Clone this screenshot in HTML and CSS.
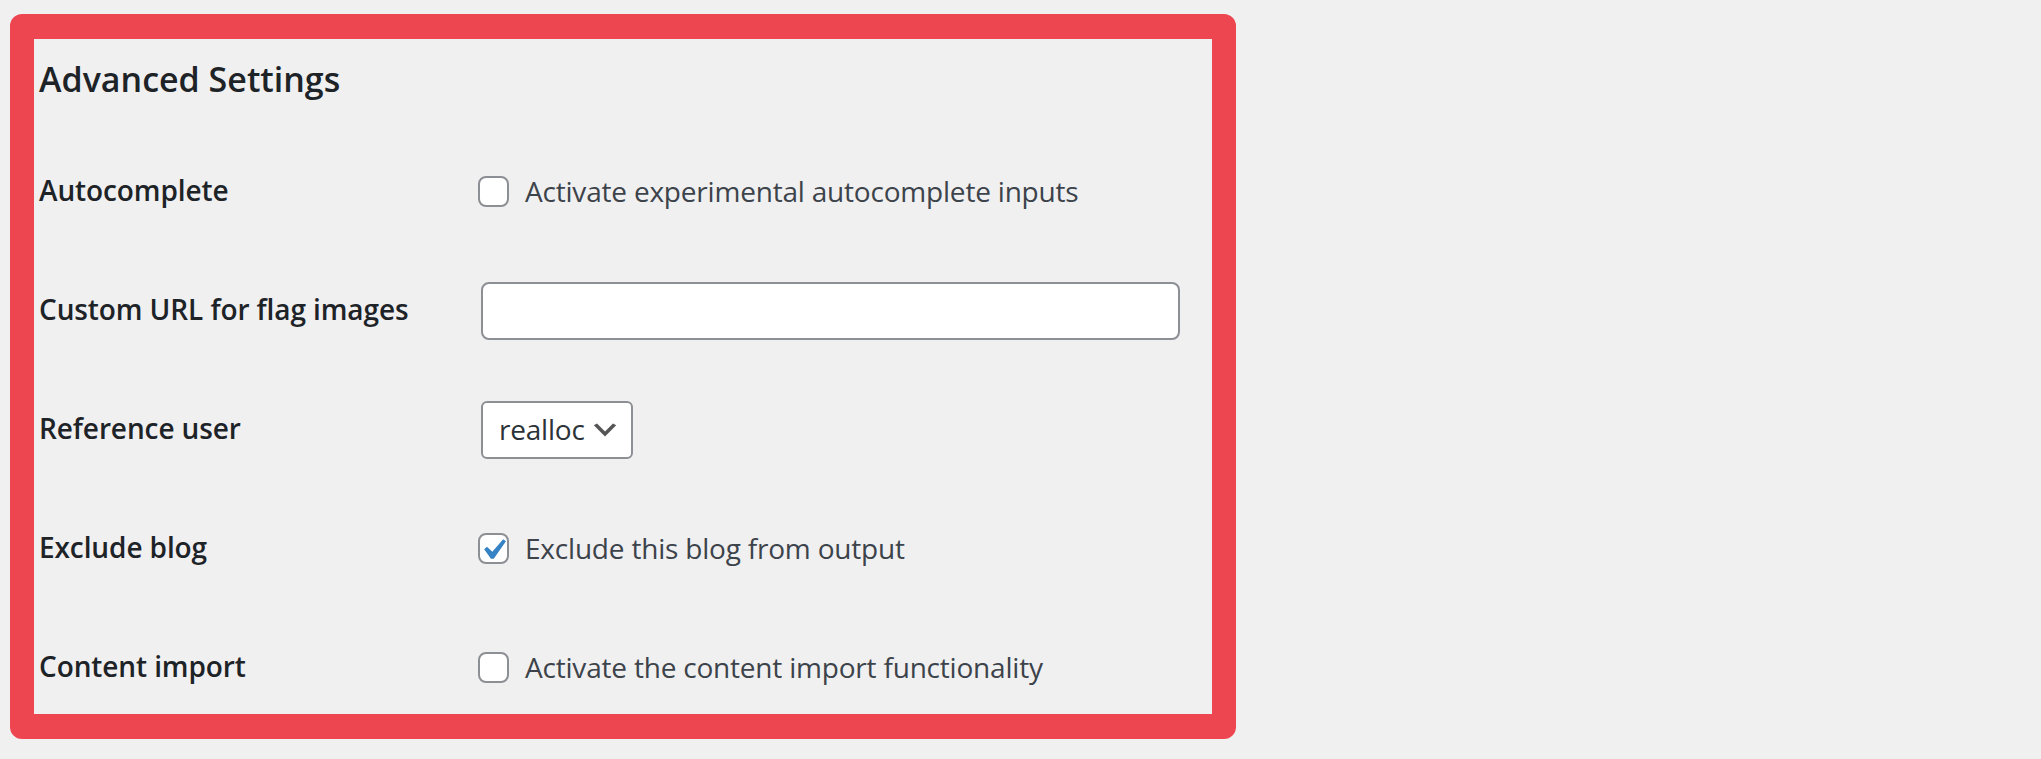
FILE: index.html
```html
<!DOCTYPE html>
<html lang="en">
<head>
<meta charset="utf-8">
<title>Advanced Settings</title>
<link rel="stylesheet" href="styles.css">
</head>
<body>
<div class="panel">
  <h2 class="title">Advanced Settings</h2>
  <div class="form">
    <div class="row">
      <div class="th">Autocomplete</div>
      <div class="td">
        <label class="check"><span class="box"></span><span class="check-text">Activate experimental autocomplete inputs</span></label>
      </div>
    </div>
    <div class="row">
      <div class="th">Custom URL for flag images</div>
      <div class="td"><div class="text-input"></div></div>
    </div>
    <div class="row">
      <div class="th">Reference user</div>
      <div class="td">
        <div class="select"><span class="select-value">realloc</span>
          <svg class="chevron" viewBox="0 0 20 20" width="32" height="32"><path d="M5 6l5 5 5-5 2 1-7 7-7-7 2-1z" fill="#555"/></svg>
        </div>
      </div>
    </div>
    <div class="row">
      <div class="th">Exclude blog</div>
      <div class="td">
        <label class="check"><span class="box checked"><svg class="tick" viewBox="0 0 20 20" width="42" height="42"><path d="M14.83 4.89l1.34.94-5.81 8.38H9.02L5.78 9.67l1.34-1.25 2.57 2.4z" fill="#3582c4"/></svg></span><span class="check-text">Exclude this blog from output</span></label>
      </div>
    </div>
    <div class="row">
      <div class="th">Content import</div>
      <div class="td">
        <label class="check"><span class="box"></span><span class="check-text">Activate the content import functionality</span></label>
      </div>
    </div>
  </div>
</div>
</body>
</html>
```

FILE: styles.css
```css
html, body {
  margin: 0;
  padding: 0;
  background: #f0f0f1;
}
body {
  font-family: "Open Sans", "Noto Sans", "DejaVu Sans", sans-serif;
  color: #3c434a;
}
.panel {
  margin: 14px 0 0 10px;
  width: 1173px;
  height: 675px;
  padding-left: 5px;
  border: 24px solid #ee4650;
  border-top-width: 25px;
  border-bottom-width: 25px;
  border-radius: 12px;
  overflow: hidden;
}
.title {
  margin: 0;
  padding-top: 18px;
  font-size: 34px;
  font-weight: 600;
  line-height: 44px;
  color: #1d2327;
}
.form {
  margin-top: 31px;
}
.row {
  display: grid;
  grid-template-columns: 442px 1fr;
  align-items: center;
  height: 119px;
}
.th {
  font-size: 28px;
  font-weight: 600;
  line-height: 36px;
  padding-bottom: 3px;
  color: #1d2327;
  letter-spacing: -0.1px;
}
.td {
  font-size: 28px;
  line-height: 36px;
  color: #3c434a;
  letter-spacing: -0.2px;
}
.check {
  display: flex;
  align-items: center;
}
.check-text {
  padding-bottom: 2px;
}
.box {
  position: relative;
  flex: none;
  width: 31px;
  height: 31px;
  box-sizing: border-box;
  border: 2px solid #8c8f94;
  border-radius: 8px;
  background: #fff;
  margin: 0 16px 0 -3px;
}
.tick {
  position: absolute;
  left: -8px;
  top: -6px;
}
.text-input {
  width: 699px;
  height: 58px;
  box-sizing: border-box;
  border: 2px solid #8c8f94;
  border-radius: 8px;
  background: #fff;
}
.select {
  display: flex;
  align-items: center;
  justify-content: space-between;
  width: 152px;
  height: 58px;
  box-sizing: border-box;
  padding: 0 10px 0 16px;
  border: 2px solid #8c8f94;
  border-radius: 6px;
  background: #fff;
  color: #2c3338;
}
.select-value {
  padding-bottom: 2px;
}
.chevron {
  flex: none;
}
```
